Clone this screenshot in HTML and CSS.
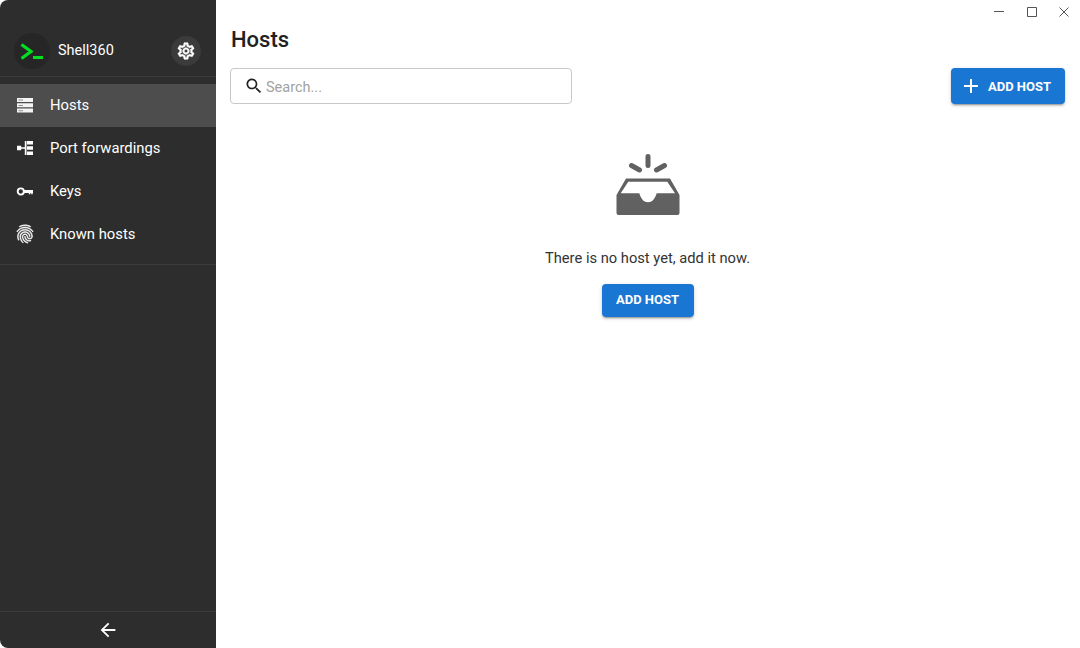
FILE: index.html
```html
<!DOCTYPE html>
<html>
<head>
<meta name="viewport" content="width=device-width, initial-scale=1">
<title>Shell360</title>
<link rel="stylesheet" href="styles.css">
</head>
<body>

<div class="app">

<aside class="side">
<div class="brand">
<span class="logo">
<svg viewBox="0 0 36 36" width="36" height="36"><path d="M7.500 11.500 L17 18.500 L7.500 25.500" fill="none" stroke="#00e022" stroke-width="3.200"/><rect x="19" y="23" width="10" height="3" fill="#00e022"/></svg>
</span>
<span class="appname">Shell360</span>
<button class="gear">
<svg viewBox="0 0 24 24" width="20" height="20"><path d="M19.43 12.98c.04-.32.07-.64.07-.98 0-.34-.03-.66-.07-.98l2.11-1.65c.19-.15.24-.42.12-.64l-2-3.46c-.09-.16-.26-.25-.44-.25-.06 0-.12.01-.17.03l-2.49 1c-.52-.4-1.08-.73-1.69-.98l-.38-2.65C14.46 2.18 14.25 2 14 2h-4c-.25 0-.46.18-.49.42l-.38 2.65c-.61.25-1.17.59-1.69.98l-2.49-1c-.06-.02-.12-.03-.18-.03-.17 0-.34.09-.43.25l-2 3.46c-.13.22-.07.49.12.64l2.11 1.65c-.04.32-.07.65-.07.98 0 .33.03.66.07.98l-2.11 1.65c-.19.15-.24.42-.12.64l2 3.46c.09.16.26.25.44.25.06 0 .12-.01.17-.03l2.49-1c.52.4 1.08.73 1.69.98l.38 2.65c.03.24.24.42.49.42h4c.25 0 .46-.18.49-.42l.38-2.65c.61-.25 1.17-.59 1.69-.98l2.49 1c.06.02.12.03.18.03.17 0 .34-.09.43-.25l2-3.46c.12-.22.07-.49-.12-.64l-2.11-1.65zm-1.98-1.71c.04.31.05.52.05.73 0 .21-.02.43-.05.73l-.14 1.13.89.7 1.08.84-.7 1.21-1.27-.51-1.04-.42-.9.68c-.43.32-.84.56-1.25.73l-1.06.43-.16 1.13-.2 1.35h-1.4l-.19-1.35-.16-1.13-1.06-.43c-.43-.18-.83-.41-1.23-.71l-.91-.7-1.06.43-1.27.51-.7-1.21 1.08-.84.89-.7-.14-1.13c-.03-.31-.05-.54-.05-.74s.02-.43.05-.73l.14-1.13-.89-.7-1.08-.84.7-1.21 1.27.51 1.04.42.9-.68c.43-.32.84-.56 1.25-.73l1.06-.43.16-1.13.2-1.35h1.39l.19 1.35.16 1.13 1.06.43c.43.18.83.41 1.23.71l.91.7 1.06-.43 1.27-.51.7 1.21-1.07.85-.89.7.14 1.13zM12 8c-2.21 0-4 1.79-4 4s1.79 4 4 4 4-1.79 4-4-1.79-4-4-4zm0 6c-1.1 0-2-.9-2-2s.9-2 2-2 2 .9 2 2-.9 2-2 2z" fill="#fff" stroke="#fff" stroke-width=".6"/></svg>
</button>
</div>

<nav class="nav">
<a class="item active">
<svg viewBox="0 0 20 20" width="20" height="20"><path d="M2 3h16v4H2zM2 8.300h16v4H2zM2 13.600h16v4H2z" fill="#f4f4f4"/><path d="M3.500 4.600H8v1H3.500zM3.500 9.900H8v1H3.500zM3.500 15.200H8v1H3.500z" fill="#8c8c8c"/></svg>
<span>Hosts</span>
</a>
<a class="item">
<svg viewBox="0 0 20 20" width="20" height="20"><path d="M2 7.800h4.200v4.400H2zM6 9.300h4v1.400H6zM9.800 3h1.700v14H9.800zM12 3h6v3.600h-6zM12 8.200h6v3.600h-6zM12 13.400h6V17h-6z" fill="#fff"/></svg>
<span>Port forwardings</span>
</a>
<a class="item">
<svg viewBox="0 0 20 20" width="20" height="20"><circle cx="5.800" cy="10.500" r="3.100" fill="none" stroke="#fff" stroke-width="1.900"/><path d="M9 9h9v3h-.3v1.300h-1.500V12h-.9v1.300h-1.500V12H9z" fill="#fff"/></svg>
<span>Keys</span>
</a>
<a class="item">
<svg class="print" viewBox="0 0 24 24" width="22" height="22"><path d="M17.81 4.47c-.08 0-.16-.02-.23-.06C15.66 3.42 14 3 12.01 3c-1.98 0-3.86.47-5.58 1.41-.24.13-.54.04-.68-.2-.13-.24-.04-.55.2-.68C7.82 2.52 9.86 2 12.01 2c2.13 0 3.99.47 6.03 1.52.25.13.34.43.21.67-.09.18-.26.28-.44.28zM3.5 9.72c-.1 0-.2-.03-.29-.09-.23-.16-.28-.47-.12-.7.99-1.4 2.25-2.5 3.75-3.27C9.98 4.04 14 4.03 17.15 5.65c1.5.77 2.76 1.86 3.75 3.25.16.22.11.54-.12.7-.23.16-.54.11-.7-.12-.9-1.26-2.04-2.25-3.39-2.94-2.87-1.47-6.54-1.47-9.4.01-1.36.7-2.5 1.7-3.4 2.96-.08.14-.23.21-.39.21zm6.25 12.07c-.13 0-.26-.05-.35-.15-.87-.87-1.34-1.43-2.01-2.64-.69-1.23-1.05-2.73-1.05-4.34 0-2.97 2.54-5.39 5.66-5.39s5.66 2.42 5.66 5.39c0 .28-.22.5-.5.5s-.5-.22-.5-.5c0-2.42-2.09-4.39-4.66-4.39s-4.66 1.97-4.66 4.39c0 1.44.32 2.77.93 3.85.64 1.15 1.08 1.64 1.85 2.42.19.2.19.51 0 .71-.11.1-.24.15-.37.15zm7.17-1.85c-1.19 0-2.24-.3-3.1-.89-1.49-1.01-2.38-2.65-2.38-4.39 0-.28.22-.5.5-.5s.5.22.5.5c0 1.41.72 2.74 1.94 3.56.71.48 1.54.71 2.54.71.24 0 .64-.03 1.04-.1.27-.05.53.13.58.41.05.27-.13.53-.41.58-.57.11-1.07.12-1.21.12zM14.91 22c-.04 0-.09-.01-.13-.02-1.59-.44-2.63-1.03-3.72-2.1-1.4-1.39-2.17-3.24-2.17-5.22 0-1.62 1.38-2.94 3.08-2.94 1.7 0 3.08 1.32 3.08 2.94 0 1.07.93 1.94 2.08 1.94s2.08-.87 2.08-1.94c0-3.77-3.25-6.83-7.25-6.83-2.84 0-5.44 1.58-6.61 4.03-.39.81-.59 1.76-.59 2.8 0 .78.07 2.01.67 3.61.1.26-.03.55-.29.64-.26.1-.55-.04-.64-.29-.49-1.31-.73-2.61-.73-3.96 0-1.2.23-2.29.68-3.24 1.33-2.79 4.28-4.6 7.51-4.6 4.55 0 8.25 3.51 8.25 7.83 0 1.62-1.38 2.94-3.08 2.94s-3.08-1.32-3.08-2.94c0-1.07-.93-1.94-2.08-1.94s-2.08.87-2.08 1.94c0 1.71.66 3.31 1.87 4.51.95.94 1.86 1.46 3.27 1.85.27.07.42.35.35.61-.05.23-.26.38-.47.38z" fill="#fff" stroke="#fff" stroke-width=".5"/></svg>
<span>Known hosts</span>
</a>
</nav>

<div class="foot">
<svg viewBox="0 0 24 24" width="22" height="22"><path d="M20 11H7.830l5.590-5.590L12 4l-8 8 8 8 1.410-1.410L7.830 13H20v-2z" fill="#fff"/></svg>
</div>
</aside>

<main class="main">
<div class="winbar">
<svg class="wmin" viewBox="0 0 10 10" width="10" height="10"><path d="M0 4.500h10" stroke="#555" fill="none"/></svg>
<svg viewBox="0 0 10 10" width="10" height="10"><path d="M.5 .5h9v9h-9z" stroke="#555" fill="none"/></svg>
<svg viewBox="0 0 10 10" width="10" height="10"><path d="M.5 .5l9 9M9.500 .5l-9 9" stroke="#555" fill="none"/></svg>
</div>

<h1>Hosts</h1>

<div class="tools">
<label class="search">
<svg viewBox="0 0 24 24" width="20" height="20"><path d="M15.500 14h-.79l-.28-.27C15.410 12.590 16 11.110 16 9.500 16 5.910 13.090 3 9.500 3S3 5.910 3 9.500 5.910 16 9.500 16c1.610 0 3.090-.59 4.230-1.570l.27.28v.79l5 4.990L20.490 19l-4.990-5zm-6 0C7.010 14 5 11.990 5 9.500S7.010 5 9.500 5 14 7.010 14 9.500 11.990 14 9.500 14z" fill="#222"/></svg>
<input type="text" placeholder="Search...">
</label>
<button class="btn big">
<svg viewBox="0 0 24 24" width="24" height="24"><path d="M19 13h-6v6h-2v-6H5v-2h6V5h2v6h6v2z" fill="#fff"/></svg>
ADD HOST
</button>
</div>

<div class="empty">
<svg class="tray" viewBox="0 0 64 64" width="64" height="64">
<g stroke="#616161" stroke-width="5" stroke-linecap="round"><path d="M32 3.500v9M15.500 12.500l8 4.500M48.500 12.500l-8 4.500"/></g>
<path fill-rule="evenodd" fill="#616161" d="M10 25.500H54L63.500 42V60q0 2-2 2H2.500q-2 0-2-2V42ZM12.300 28.700L4.700 40.300H23.300C25 46 28 49.300 32 49.300S39 46 40.700 40.300H59L51.300 28.700Z"/>
</svg>
<p>There is no host yet, add it now.</p>
<button class="btn">ADD HOST</button>
</div>
</main>

</div>

</body>
</html>
```

FILE: styles.css
```css
html,body{margin:0;height:100%;background-color:#fff;}
body{font-family:Roboto,"Liberation Sans",sans-serif;color:#212121;overflow:hidden;}
svg{display:block;flex:none;}
button{font-family:inherit;border:none;cursor:pointer;}

.app{display:flex;height:648px;}

.side{display:flex;flex-direction:column;flex:none;width:216px;background-color:#2d2d2d;color:#fff;border-radius:8px 0 0 8px;}
.brand{display:flex;align-items:center;height:77px;padding:25px 15px 0 14px;box-sizing:border-box;border-bottom:1px solid #3c3c3c;margin-bottom:7px;}
.logo{width:36px;height:36px;border-radius:50%;background-color:#262626;margin-right:8px;}
.appname{flex:1;font-size:14.5px;}
.gear{display:flex;align-items:center;justify-content:center;width:30px;height:30px;padding:0;border-radius:50%;background-color:#3b3b3b;}

.nav{flex:1;}
.nav::after{content:"";display:block;margin-top:8px;border-bottom:1px solid #3c3c3c;}
.item{display:flex;align-items:center;height:43px;padding:0 0 2px 15px;box-sizing:border-box;font-size:14.8px;}
.item svg{width:20px;margin-right:15px;}
.item svg.print{width:22px;margin:0 14px 0 -1px;}
.item.active{background-color:#4d4d4d;}

.foot{display:flex;align-items:center;justify-content:center;height:36px;border-top:1px solid #3c3c3c;}

.main{flex:1;min-width:0;padding:0 15px 0 14px;}
.winbar{display:flex;justify-content:flex-end;gap:22px;height:26px;padding:7px 0 0;margin-right:-4px;box-sizing:border-box;}
.wmin{margin-right:1px;}
h1{margin:0 0 14px;padding-left:1px;font-size:22px;font-weight:500;line-height:28px;}

.tools{display:flex;justify-content:space-between;align-items:center;}
.search{display:flex;align-items:center;gap:2px;width:342px;height:36px;padding-left:13px;box-sizing:border-box;border:1px solid #c8c8c8;border-radius:4px;}
.search input{flex:1;min-width:0;border:none;outline:none;padding:2px 0 0;font-family:inherit;font-size:14.5px;background:none;}
.search input::placeholder{color:#a2a2a2;opacity:1;}

.btn{display:flex;align-items:center;justify-content:center;width:92px;height:33px;padding:0 0 2px;font-size:13px;font-weight:700;color:#fff;background-color:#1976d2;border-radius:4px;box-shadow:0 3px 1px -2px rgba(0,0,0,.2),0 2px 2px 0 rgba(0,0,0,.14),0 1px 5px 0 rgba(0,0,0,.12);}
.btn.big{width:114px;height:36px;gap:5px;padding:0 6px 0 0;}

.empty{display:flex;flex-direction:column;align-items:center;padding-top:49px;}
.empty p{margin:31px 0 16px;font-size:14.7px;line-height:20px;color:#333;}
```
